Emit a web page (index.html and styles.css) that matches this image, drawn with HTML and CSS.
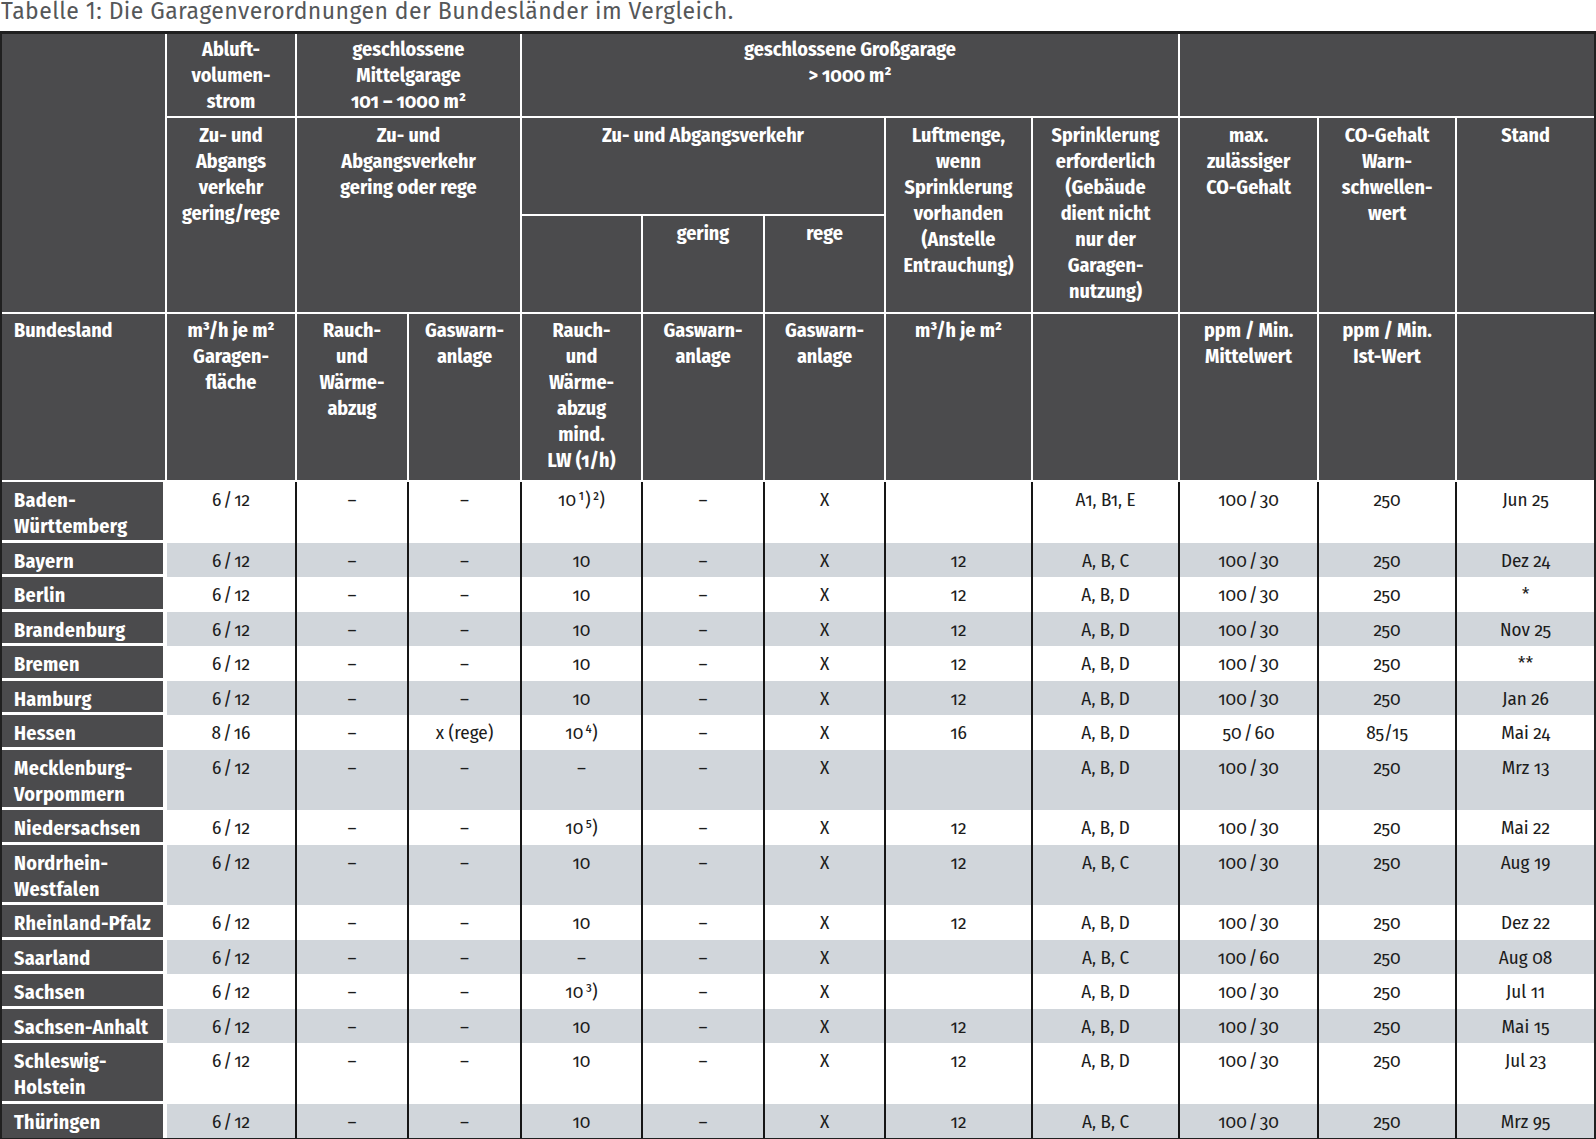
FILE: index.html
```html
<!DOCTYPE html>
<html lang="de">
<head>
<meta charset="utf-8">
<title>Garagenverordnungen</title>
<link rel="stylesheet" href="styles.css">
</head>
<body>
<p class="caption">Tabelle 1: Die Garagenverordnungen der Bundesländer im Vergleich.</p>
<table class="gv">
<colgroup>
<col class="w1"><col class="w2"><col class="w3"><col class="w4"><col class="w5"><col class="w6"><col class="w7"><col class="w8"><col class="w9"><col class="w10"><col class="w11"><col class="w12">
</colgroup>
<thead>
<tr class="hA">
<th class="lead" rowspan="3"></th>
<th>Abluft-<br>volumen-<br>strom</th>
<th colspan="2">geschlossene<br>Mittelgarage<br>101 – 1000 m²</th>
<th colspan="5">geschlossene Großgarage<br>&gt; 1000 m²</th>
<th colspan="3" class="last"></th>
</tr>
<tr class="hB">
<th rowspan="2">Zu- und<br>Abgangs<br>verkehr<br>gering/rege</th>
<th colspan="2" rowspan="2">Zu- und<br>Abgangsverkehr<br>gering oder rege</th>
<th colspan="3">Zu- und Abgangsverkehr</th>
<th rowspan="2">Luftmenge,<br>wenn<br>Sprinklerung<br>vorhanden<br>(Anstelle<br>Entrauchung)</th>
<th rowspan="2">Sprinklerung<br>erforderlich<br>(Gebäude<br>dient nicht<br>nur der<br>Garagen-<br>nutzung)</th>
<th rowspan="2">max.<br>zulässiger<br>CO-Gehalt</th>
<th rowspan="2">CO-Gehalt<br>Warn-<br>schwellen-<br>wert</th>
<th rowspan="2" class="last">Stand</th>
</tr>
<tr class="hC">
<th></th>
<th>gering</th>
<th>rege</th>
</tr>
<tr class="hD">
<th class="lead">Bundesland</th>
<th>m³/h je m²<br>Garagen-<br>fläche</th>
<th>Rauch-<br>und<br>Wärme-<br>abzug</th>
<th>Gaswarn-<br>anlage</th>
<th>Rauch-<br>und<br>Wärme-<br>abzug<br>mind.<br>LW (1/h)</th>
<th>Gaswarn-<br>anlage</th>
<th>Gaswarn-<br>anlage</th>
<th>m³/h je m²</th>
<th></th>
<th>ppm / Min.<br>Mittelwert</th>
<th>ppm / Min.<br>Ist-Wert</th>
<th class="last"></th>
</tr>
</thead>
<tbody>
<tr><th class="land">Baden-<br>Württemberg</th><td class="sl">6 / 12</td><td>–</td><td>–</td><td class="sl">10 ¹) ²)</td><td>–</td><td>X</td><td></td><td>A1, B1, E</td><td class="sl">100 / 30</td><td>250</td><td>Jun 25</td></tr>
<tr><th class="land">Bayern</th><td class="sl">6 / 12</td><td>–</td><td>–</td><td>10</td><td>–</td><td>X</td><td>12</td><td>A, B, C</td><td class="sl">100 / 30</td><td>250</td><td>Dez 24</td></tr>
<tr><th class="land">Berlin</th><td class="sl">6 / 12</td><td>–</td><td>–</td><td>10</td><td>–</td><td>X</td><td>12</td><td>A, B, D</td><td class="sl">100 / 30</td><td>250</td><td>*</td></tr>
<tr><th class="land">Brandenburg</th><td class="sl">6 / 12</td><td>–</td><td>–</td><td>10</td><td>–</td><td>X</td><td>12</td><td>A, B, D</td><td class="sl">100 / 30</td><td>250</td><td>Nov 25</td></tr>
<tr><th class="land">Bremen</th><td class="sl">6 / 12</td><td>–</td><td>–</td><td>10</td><td>–</td><td>X</td><td>12</td><td>A, B, D</td><td class="sl">100 / 30</td><td>250</td><td>**</td></tr>
<tr><th class="land">Hamburg</th><td class="sl">6 / 12</td><td>–</td><td>–</td><td>10</td><td>–</td><td>X</td><td>12</td><td>A, B, D</td><td class="sl">100 / 30</td><td>250</td><td>Jan 26</td></tr>
<tr><th class="land">Hessen</th><td class="sl">8 / 16</td><td>–</td><td>x (rege)</td><td class="sl">10 ⁴)</td><td>–</td><td>X</td><td>16</td><td>A, B, D</td><td class="sl">50 / 60</td><td>85/15</td><td>Mai 24</td></tr>
<tr><th class="land">Mecklenburg-<br>Vorpommern</th><td class="sl">6 / 12</td><td>–</td><td>–</td><td>–</td><td>–</td><td>X</td><td></td><td>A, B, D</td><td class="sl">100 / 30</td><td>250</td><td>Mrz 13</td></tr>
<tr><th class="land">Niedersachsen</th><td class="sl">6 / 12</td><td>–</td><td>–</td><td class="sl">10 ⁵)</td><td>–</td><td>X</td><td>12</td><td>A, B, D</td><td class="sl">100 / 30</td><td>250</td><td>Mai 22</td></tr>
<tr><th class="land">Nordrhein-<br>Westfalen</th><td class="sl">6 / 12</td><td>–</td><td>–</td><td>10</td><td>–</td><td>X</td><td>12</td><td>A, B, C</td><td class="sl">100 / 30</td><td>250</td><td>Aug 19</td></tr>
<tr><th class="land">Rheinland-Pfalz</th><td class="sl">6 / 12</td><td>–</td><td>–</td><td>10</td><td>–</td><td>X</td><td>12</td><td>A, B, D</td><td class="sl">100 / 30</td><td>250</td><td>Dez 22</td></tr>
<tr><th class="land">Saarland</th><td class="sl">6 / 12</td><td>–</td><td>–</td><td>–</td><td>–</td><td>X</td><td></td><td>A, B, C</td><td class="sl">100 / 60</td><td>250</td><td>Aug 08</td></tr>
<tr><th class="land">Sachsen</th><td class="sl">6 / 12</td><td>–</td><td>–</td><td class="sl">10 ³)</td><td>–</td><td>X</td><td></td><td>A, B, D</td><td class="sl">100 / 30</td><td>250</td><td>Jul 11</td></tr>
<tr><th class="land">Sachsen-Anhalt</th><td class="sl">6 / 12</td><td>–</td><td>–</td><td>10</td><td>–</td><td>X</td><td>12</td><td>A, B, D</td><td class="sl">100 / 30</td><td>250</td><td>Mai 15</td></tr>
<tr><th class="land">Schleswig-<br>Holstein</th><td class="sl">6 / 12</td><td>–</td><td>–</td><td>10</td><td>–</td><td>X</td><td>12</td><td>A, B, D</td><td class="sl">100 / 30</td><td>250</td><td>Jul 23</td></tr>
<tr class="final"><th class="land">Thüringen</th><td class="sl">6 / 12</td><td>–</td><td>–</td><td>10</td><td>–</td><td>X</td><td>12</td><td>A, B, C</td><td class="sl">100 / 30</td><td>250</td><td>Mrz 95</td></tr>
</tbody>
</table>
</body>
</html>
```

FILE: styles.css
```css
html, body {
  margin: 0;
  padding: 0;
  background: #ffffff;
}

.caption {
  margin: 0;
  height: 31px;
  padding-left: 1px;
  font-family: "Fira Sans", "Open Sans", sans-serif;
  font-weight: 400;
  font-size: 23px;
  line-height: 23px;
  letter-spacing: 0.42px;
  color: #555759;
  white-space: nowrap;
}

.gv {
  border-collapse: separate;
  border-spacing: 0;
  table-layout: fixed;
  width: 1596px;
  border: 2px solid #202020;
  border-top-width: 3px;
  font-family: "Fira Sans Condensed", "Open Sans", sans-serif;
  font-stretch: 75%;
  font-variant-numeric: oldstyle-nums;
}

.w1 { width: 165px; }
.w2 { width: 130px; }
.w3 { width: 112px; }
.w4 { width: 113px; }
.w5 { width: 121px; }
.w6 { width: 122px; }
.w7 { width: 121px; }
.w8 { width: 147px; }
.w9 { width: 147px; }
.w10 { width: 139px; }
.w11 { width: 138px; }
.w12 { width: 137px; }

.gv thead th {
  background: #4b4b4d;
  color: #ffffff;
  font-weight: 700;
  font-size: 20px;
  line-height: 26px;
  text-align: center;
  vertical-align: top;
  padding: 3.5px 2px 0;
  border-right: 2px solid #ffffff;
  border-bottom: 2px solid #ffffff;
  white-space: nowrap;
}

.gv thead .hA th {
  padding-top: 2px;
}

.gv thead th.last {
  border-right: 0;
}

.gv thead th.lead {
  text-align: left;
  padding-left: 12px;
}

.hA { height: 84px; }
.hB { height: 98px; }
.hC { height: 97.5px; }
.hD { height: 168.5px; }

.gv tbody th.land {
  background: #4b4b4d;
  color: #ffffff;
  font-weight: 700;
  font-size: 20px;
  line-height: 26px;
  letter-spacing: 0.3px;
  text-align: left;
  vertical-align: top;
  padding: 5px 4px 0.5px 12px;
  border-right: 4px solid #ffffff;
  border-bottom: 3px solid #ffffff;
  white-space: nowrap;
}

.gv tbody tr.final th.land {
  border-bottom: 0;
  padding-bottom: 3.5px;
}

.gv tbody td {
  color: #1c1c1c;
  font-weight: 400;
  font-size: 19px;
  line-height: 26px;
  text-align: center;
  vertical-align: top;
  padding: 5px 2px 0;
  border-right: 2px solid #161616;
  white-space: nowrap;
}

.gv tbody td.sl {
  word-spacing: -2.5px;
}

.gv tbody td:last-child {
  border-right: 0;
}

.gv tbody tr:nth-child(even) td {
  background: #d1d6db;
}
```
